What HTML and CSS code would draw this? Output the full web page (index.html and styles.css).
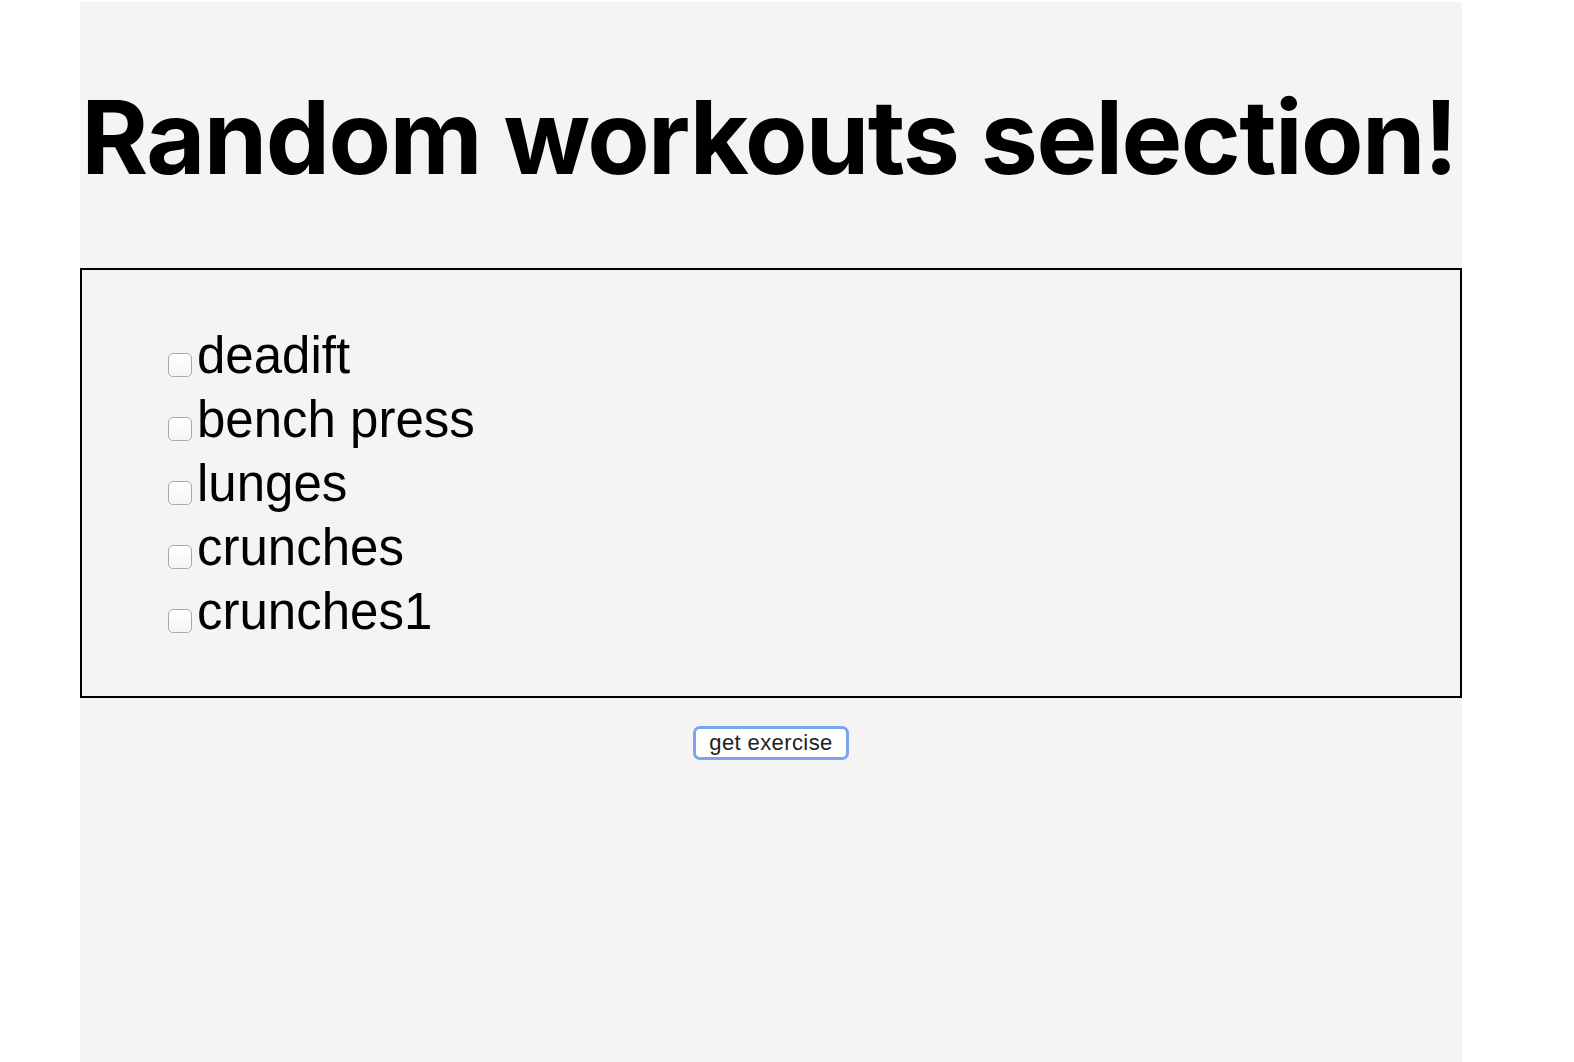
FILE: index.html
```html
<!DOCTYPE html>
<html>
<head>
<meta charset="utf-8">
<link rel="stylesheet" href="styles.css">
</head>
<body>
<div class="app">
  <h1 class="title">Random workouts selection!</h1>
  <div class="box">
    <ul class="list">
      <li class="item"><input type="checkbox" class="check"><span class="label">deadift</span></li>
      <li class="item"><input type="checkbox" class="check"><span class="label">bench press</span></li>
      <li class="item"><input type="checkbox" class="check"><span class="label">lunges</span></li>
      <li class="item"><input type="checkbox" class="check"><span class="label">crunches</span></li>
      <li class="item"><input type="checkbox" class="check"><span class="label">crunches1</span></li>
    </ul>
  </div>
  <div class="actions">
    <button class="btn">get exercise</button>
  </div>
</div>
</body>
</html>
```

FILE: styles.css
```css
html, body {
  margin: 0;
  padding: 0;
  background: #ffffff;
}
body {
  padding-top: 2px;
}
.app {
  margin-left: 80px;
  width: 1382px;
  height: 1060px;
  background: #f4f4f4;
  overflow: hidden;
  display: flex;
  flex-direction: column;
}
.title {
  font-family: Inter, "Liberation Sans", sans-serif;
  font-weight: 700;
  font-size: 102px;
  line-height: 1.2;
  letter-spacing: -1.6px;
  color: #000;
  text-align: center;
  margin: 74px 4px 70px 0;
  white-space: nowrap;
}
.box {
  border: 2px solid #000;
  padding: 54px 0 52px 86px;
}
.list {
  list-style: none;
  margin: 0;
  padding: 0;
}
.item {
  font-family: "Liberation Sans", Arial, sans-serif;
  font-size: 51px;
  line-height: 64px;
  color: #000;
  white-space: nowrap;
}
.check {
  appearance: none;
  -webkit-appearance: none;
  width: 24px;
  height: 24px;
  margin: 0 5px 0 0;
  box-sizing: border-box;
  border: 1px solid #a9a9a9;
  border-radius: 5px;
  background: linear-gradient(#ffffff, #f5f5f5);
  vertical-align: -4px;
}
.label {
  display: inline;
}
.actions {
  display: flex;
  justify-content: center;
  padding-top: 28px;
}
.btn {
  font-family: "Liberation Sans", Arial, sans-serif;
  font-size: 22px;
  letter-spacing: 0.4px;
  color: #222;
  background: #fff;
  border: 3px solid #79a6ea;
  border-radius: 7px;
  width: 156px;
  height: 34px;
  padding: 0;
  line-height: 28px;
}
```
